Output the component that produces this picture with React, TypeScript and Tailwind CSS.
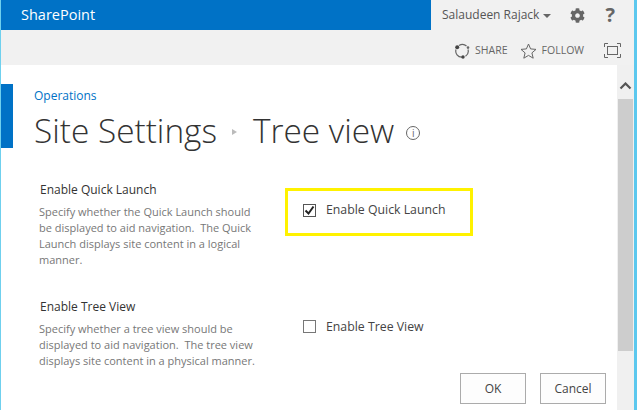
import { FaCog } from "react-icons/fa";

const font = { fontFamily: '"Open Sans", "Noto Sans", sans-serif' };

function ShareIcon() {
  return (
    <svg width="16" height="16" viewBox="0 0 16 16" fill="none">
      <path d="M5 2.600A6 6 0 0 1 12.500 3M14 6.500A6 6 0 0 1 11.500 13.200M8 14.200A6 6 0 0 1 2 6.500" stroke="#666" strokeWidth="1.200" />
      <circle cx="3.200" cy="4.200" r="2" fill="#444" />
      <circle cx="14" cy="4.600" r="1.300" fill="#666" />
      <circle cx="9" cy="14" r="1.700" fill="#444" />
    </svg>
  );
}

function StarIcon() {
  return (
    <svg width="17" height="16" viewBox="0 0 17 16" fill="none">
      <path d="M8.500 1l2.100 4.900 5.400.5-4.100 3.500 1.300 5.300-4.700-2.800-4.700 2.800 1.300-5.300L1 6.400l5.400-.5z" stroke="#666" strokeWidth="1" />
    </svg>
  );
}

function FocusIcon() {
  return (
    <svg width="17" height="15" viewBox="0 0 17 15" fill="none">
      <path d="M.5 4V.5H4M13 .5h3.500V4M16.500 11v3.500H13M4 14.500H.5V11" stroke="#666" />
      <rect x="3.500" y="3.500" width="10" height="8" stroke="#666" />
    </svg>
  );
}

function Section({ title, lines, className }: { title: string; lines: string[]; className: string }) {
  return (
    <div className={className}>
      <div className="text-[12px] leading-[17px] text-[#333] pl-px">{title}</div>
      <div className="mt-[6px] text-[11px] leading-[16px] text-[#777]">
        {lines.map(l => (
          <div key={l} className="whitespace-pre">{l}</div>
        ))}
      </div>
    </div>
  );
}

export default function App() {
  return (
    <div style={font} className="w-[637px] h-[410px] overflow-hidden flex bg-white border-l border-l-[#6fd0ee] border-r-[3px] border-r-[#5cc8ee]">
      <div className="flex-1 min-w-0 flex flex-col">
        {/* suite bar */}
        <div className="h-[30px] shrink-0 flex bg-[#f1f1f1]">
          <div className="w-[430px] bg-[#0072c6] text-white text-[14.500px] leading-[30px] pl-[20px]">SharePoint</div>
          <div className="flex-1 flex items-center text-[#555] text-[12px] pl-[11px]">
            <span className="whitespace-nowrap">Salaudeen Rajack</span>
            <span className="ml-[4px] mt-[2px] w-0 h-0 border-x-[4px] border-x-transparent border-t-[4px] border-t-[#666]" />
            <FaCog size={15} className="ml-[19px] text-[#666]" />
            <span className="ml-[20px] text-[#666] text-[20px] font-bold">?</span>
          </div>
        </div>
        {/* share / follow */}
        <div className="h-[35px] shrink-0 bg-[#f1f1f1] flex items-center justify-end pr-[13px] pt-[6px] text-[#666] text-[10.500px]">
          <ShareIcon />
          <span className="ml-[5px]">SHARE</span>
          <span className="ml-[12px]"><StarIcon /></span>
          <span className="ml-[5px]">FOLLOW</span>
          <span className="ml-[20px]"><FocusIcon /></span>
        </div>
        <div className="flex-1 flex min-h-0">
          {/* page */}
          <div className="flex-1 min-w-0 relative">
            <div className="absolute left-0 top-[19px] w-[12px] h-[64px] bg-[#0072c6]" />
            <div className="pl-[33px] pt-[22px]">
              <div className="text-[12px] leading-[18px] text-[#0072c6]">Operations</div>
              <div className="flex items-center mt-[2px] h-[46px] text-[#333] font-light text-[33.400px] leading-[46px] whitespace-nowrap">
                <span>Site Settings</span>
                <span className="ml-[15px] mt-[3px] w-0 h-0 border-y-[3.500px] border-y-transparent border-l-[5px] border-l-[#bbb]" />
                <span className="ml-[16px]">Tree view</span>
                <span className="ml-[12px] mt-[5px] w-[14px] h-[14px] rounded-full border border-[#666] text-[#666] text-[10px] leading-[12px] text-center font-normal">i</span>
              </div>
            </div>
            <div className="flex pl-[38px]">
              <div className="w-[225px] shrink-0">
                <Section
                  className="mt-[28px]"
                  title="Enable Quick Launch"
                  lines={["Specify whether the Quick Launch should", "be displayed to aid navigation.  The Quick", "Launch displays site content in a logical", "manner."]}
                />
                <Section
                  className="mt-[30px]"
                  title="Enable Tree View"
                  lines={["Specify whether a tree view should be", "displayed to aid navigation.  The tree view", "displays site content in a physical manner."]}
                />
              </div>
              <div className="ml-[21px]">
                <div className="mt-[35px] w-[188px] h-[48px] border-[3px] border-[#fff200] flex items-center pl-[15px] pb-[3px]">
                  <span className="w-[13px] h-[13px] border border-[#555] flex items-center justify-center">
                    <svg width="11" height="11" viewBox="0 0 11 11" fill="none">
                      <path d="M1.500 5.500l3 3 5-7" stroke="#222" strokeWidth="2" />
                    </svg>
                  </span>
                  <span className="ml-[10px] text-[12.300px] text-[#444] whitespace-nowrap">Enable Quick Launch</span>
                </div>
                <div className="mt-[82px] flex items-center pl-[18px]">
                  <span className="w-[13px] h-[13px] mb-[2px] border border-[#777]" />
                  <span className="ml-[10px] text-[12.300px] text-[#444] whitespace-nowrap">Enable Tree View</span>
                </div>
              </div>
            </div>
            <div className="absolute right-[11px] top-[308px] flex gap-[14px]">
              <button className="w-[66px] h-[31px] border border-[#ababab] bg-[#fdfdfd] text-[12px] text-[#444]">OK</button>
              <button className="w-[66px] h-[31px] border border-[#ababab] bg-[#fdfdfd] text-[12px] text-[#444]">Cancel</button>
            </div>
          </div>
          {/* scrollbar */}
          <div className="w-[17px] shrink-0 bg-[#f0f0f0] flex flex-col items-center">
            <svg className="mt-[17px]" width="13" height="8" viewBox="0 0 13 8" fill="none">
              <path d="M1.500 6.500l5-5 5 5" stroke="#555" strokeWidth="2.200" />
            </svg>
            <div className="mt-[9px] w-[15px] h-[252px] bg-[#cdcdcd]" />
          </div>
        </div>
      </div>
    </div>
  );
}
